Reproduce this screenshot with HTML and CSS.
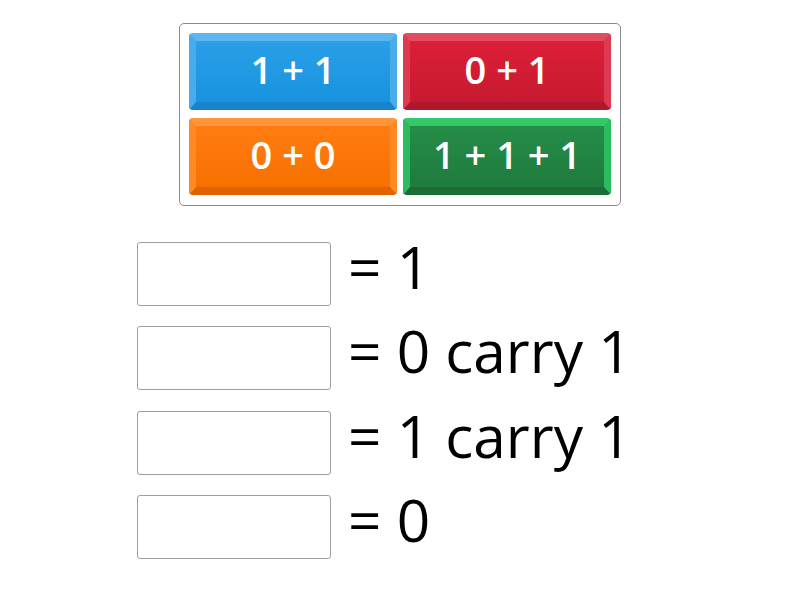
FILE: index.html
```html
<!DOCTYPE html>
<html>
<head>
<meta charset="utf-8">
<link rel="stylesheet" href="styles.css">
</head>
<body>
<div class="bank">
  <div class="tile blue">1 + 1</div>
  <div class="tile red">0 + 1</div>
  <div class="tile orange">0 + 0</div>
  <div class="tile green">1 + 1 + 1</div>
</div>
<div class="rows">
  <div class="row"><div class="slot"></div><div class="answer">= 1</div></div>
  <div class="row"><div class="slot"></div><div class="answer">= 0 carry 1</div></div>
  <div class="row"><div class="slot"></div><div class="answer">= 1 carry 1</div></div>
  <div class="row"><div class="slot"></div><div class="answer">= 0</div></div>
</div>
</body>
</html>
```

FILE: styles.css
```css
html, body {
  margin: 0;
  padding: 0;
  background: #fff;
  font-family: "Open Sans", "Liberation Sans", sans-serif;
}

.bank {
  box-sizing: border-box;
  width: 442px;
  margin: 23px auto 0;
  padding: 9px 9px 10px 9px;
  border: 1px solid #8a8a8a;
  border-radius: 5px;
  display: grid;
  grid-template-columns: 208px 208px;
  grid-auto-rows: 77px;
  column-gap: 6px;
  row-gap: 8px;
}

.tile {
  box-sizing: border-box;
  display: flex;
  align-items: center;
  justify-content: center;
  border-style: solid;
  border-width: 8px 7px 8px 7px;
  border-radius: 4px;
  padding-bottom: 6px;
  color: #fff;
  font-size: 38px;
  font-weight: 600;
  line-height: 1;
  white-space: nowrap;
}

.blue {
  background: linear-gradient(#2b9fe8, #1893df);
  border-color: #5db6ef #48aceb #1683cb #48aceb;
}

.red {
  background: linear-gradient(#dc1f38, #c71a30);
  border-color: #e34b5f #dc3a50 #b0172b #dc3a50;
}

.orange {
  background: linear-gradient(#ff7c12, #f77100);
  border-color: #ff9536 #ff8a24 #df6300 #ff8a24;
}

.green {
  background: linear-gradient(#248d47, #1f7b3e);
  border-color: #33c96b #2dbb60 #1b6c36 #2dbb60;
}

.rows {
  margin-top: 21px;
  padding-left: 137px;
  display: flex;
  flex-direction: column;
  gap: 5.33px;
}

.row {
  display: flex;
  align-items: flex-end;
}

.slot {
  box-sizing: border-box;
  width: 194px;
  height: 64px;
  border: 1px solid #9e9e9e;
  border-radius: 3px;
  background: #fff;
  flex: none;
}

.answer {
  margin-left: 17px;
  font-size: 58.5px;
  line-height: 79px;
  color: #000;
  white-space: nowrap;
}
```
